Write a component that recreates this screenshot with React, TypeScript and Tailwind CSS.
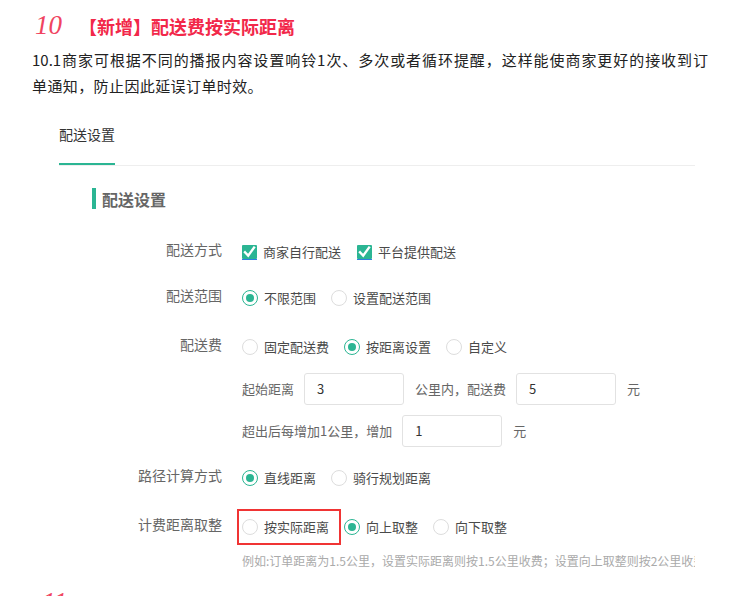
import React from 'react';

const GREEN = '#2bb593';

const Radio: React.FC<{ checked?: boolean; label: string }> = ({ checked, label }) => (
    <span className="flex items-center">
        <span
            className={`flex h-[16px] w-[16px] items-center justify-center rounded-full border ${checked ? 'border-[#2bb593]' : 'border-[#dddddd]'}`}
        >
            {checked && <span className="h-[8px] w-[8px] rounded-full bg-[#2bb593]" />}
        </span>
        <span className="ml-[6px] text-[13px] text-[#4a4a4a]">{label}</span>
    </span>
);

const Checkbox: React.FC<{ label: string }> = ({ label }) => (
    <span className="flex items-center">
        <svg width="15" height="15" viewBox="0 0 15 15">
            <rect x="0" y="0" width="15" height="14" rx="1" fill={GREEN} />
            <rect x="0" y="14" width="15" height="1" fill="#2f7fe0" />
            <path d="M3 7.2 L6.2 10.6 L12 2.6" fill="none" stroke="#fff" strokeWidth="2.4" strokeLinecap="square" />
        </svg>
        <span className="ml-[6px] text-[13px] text-[#4a4a4a]">{label}</span>
    </span>
);

const Field: React.FC<{ value: string }> = ({ value }) => (
    <div className="flex h-[32px] w-[100px] items-center rounded-[3px] border border-[#e2e2e2] pl-[12px] text-[13px] text-[#333]">
        {value}
    </div>
);

const Row: React.FC<{ label?: string; h?: string; mt: string; children: React.ReactNode }> = ({ label, h = 'h-[30px]', mt, children }) => (
    <div className={`flex items-center ${h} ${mt}`}>
        <div className="w-[130px] pb-[5px] text-right text-[14px] text-[#666]">{label}</div>
        <div className="ml-[20px] flex h-full items-center">{children}</div>
    </div>
);

export default function App() {
    return (
        <div className="relative h-[596px] w-[734px] overflow-hidden bg-white font-['Noto_Sans_CJK_SC',sans-serif]">
            {/* heading */}
            <div className="flex h-[40px] items-end pl-[35px]">
                <span className="font-['Liberation_Serif',serif] text-[27px] italic leading-[30px] text-[#f04460]">10</span>
                <span className="ml-[17px] pb-[2px] text-[18px] font-bold leading-[24px] text-[#f2284a]">【新增】配送费按实际距离</span>
            </div>

            {/* paragraph */}
            <div className="mt-[7px] pl-[32px] text-[15px] leading-[26px] text-[#222]">
                <div className="w-[676px] whitespace-nowrap [text-align-last:justify]">
                    10.1商家可根据不同的播报内容设置响铃1次、多次或者循环提醒，这样能使商家更好的接收到订
                </div>
                <div className="tracking-[0.4px]">单通知，防止因此延误订单时效。</div>
            </div>

            {/* tabs */}
            <div className="ml-[59px] mt-[22px] w-[636px] border-b border-[#eeeeee]">
                <div className="inline-block border-b-2 border-[#2bb593] pb-[19px] text-[14px] leading-[20px] text-[#333]">配送设置</div>
            </div>

            {/* section title */}
            <div className="ml-[92px] mt-[22px] flex h-[21px] items-center">
                <span className="h-[21px] w-[4px] bg-[#2bb593]" />
                <span className="ml-[6px] text-[16px] font-bold text-[#666]">配送设置</span>
            </div>

            {/* form */}
            <div className="pl-[92px]">
                <Row label="配送方式" mt="mt-[28px]">
                    <div className="flex items-center gap-[16px]">
                        <Checkbox label="商家自行配送" />
                        <Checkbox label="平台提供配送" />
                    </div>
                </Row>

                <Row label="配送范围" mt="mt-[16px]">
                    <div className="flex items-center gap-[15px]">
                        <Radio checked label="不限范围" />
                        <Radio label="设置配送范围" />
                    </div>
                </Row>

                <Row label="配送费" mt="mt-[19px]">
                    <div className="flex items-center gap-[15px]">
                        <Radio label="固定配送费" />
                        <Radio checked label="按距离设置" />
                        <Radio label="自定义" />
                    </div>
                </Row>

                <Row h="h-[32px]" mt="mt-[11px]">
                    <div className="flex items-center text-[13px] text-[#666]">
                        <span>起始距离</span>
                        <div className="ml-[10px]"><Field value="3" /></div>
                        <span className="ml-[11px]">公里内，配送费</span>
                        <div className="ml-[10px]"><Field value="5" /></div>
                        <span className="ml-[11px]">元</span>
                    </div>
                </Row>

                <Row h="h-[32px]" mt="mt-[10px]">
                    <div className="flex items-center text-[13px] text-[#666]">
                        <span>超出后每增加1公里，增加</span>
                        <div className="ml-[10px]"><Field value="1" /></div>
                        <span className="ml-[11px]">元</span>
                    </div>
                </Row>

                <Row label="路径计算方式" mt="mt-[16px]">
                    <div className="flex items-center gap-[15px]">
                        <Radio checked label="直线距离" />
                        <Radio label="骑行规划距离" />
                    </div>
                </Row>

                <Row label="计费距离取整" h="h-[36px]" mt="mt-[16px]">
                    <div className="flex h-full items-center gap-[15px]">
                        <span className="relative flex h-full items-center">
                            <Radio label="按实际距离" />
                            <span className="absolute inset-y-0 left-[-5px] right-[-12px] border-2 border-[#f03434]" />
                        </span>
                        <Radio checked label="向上取整" />
                        <Radio label="向下取整" />
                    </div>
                </Row>

                <div className="ml-[150px] mt-[6px] h-[20px] w-[453px] overflow-hidden whitespace-nowrap text-[12px] leading-[20px] text-[#aaa]">
                    例如:订单距离为1.5公里，设置实际距离则按1.5公里收费；设置向上取整则按2公里收费
                </div>
            </div>

            {/* next heading (cut off) */}
            <div className="mt-[16px] pl-[42px] font-['Liberation_Serif',serif] text-[27px] italic leading-[30px] text-[#f04460]">11</div>
        </div>
    );
}
